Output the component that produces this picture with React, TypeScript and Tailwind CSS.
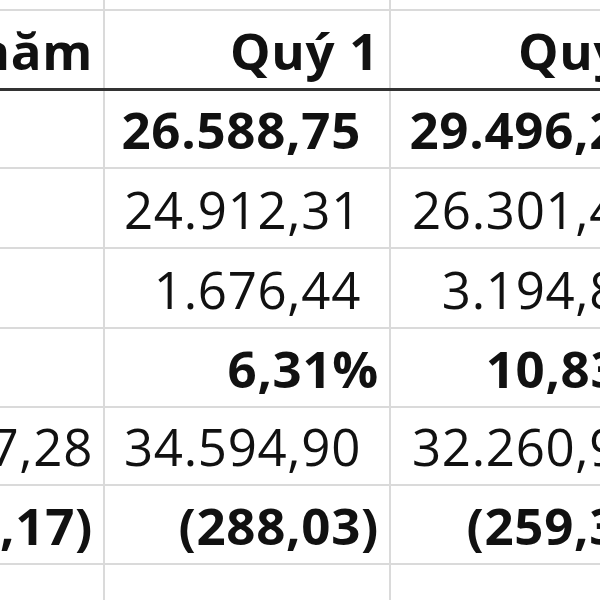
import React from "react";

type Cell = { t: string; pos?: boolean };
type Row = { h: string; bold: boolean; thick?: boolean; cells: [Cell, Cell, Cell] };

const rows: Row[] = [
  { h: "h-[80px]", bold: true, thick: true, cells: [{ t: "Cả năm" }, { t: "Quý 1" }, { t: "Quý 2" }] },
  { h: "h-[78px]", bold: true, cells: [{ t: "" }, { t: "26.588,75", pos: true }, { t: "29.496,21", pos: true }] },
  { h: "h-[80px]", bold: false, cells: [{ t: "" }, { t: "24.912,31", pos: true }, { t: "26.301,45", pos: true }] },
  { h: "h-[80px]", bold: false, cells: [{ t: "" }, { t: "1.676,44", pos: true }, { t: "3.194,83", pos: true }] },
  { h: "h-[79px]", bold: true, cells: [{ t: "" }, { t: "6,31%" }, { t: "10,83%" }] },
  { h: "h-[78px]", bold: false, cells: [{ t: "137.617,28" }, { t: "34.594,90", pos: true }, { t: "32.260,94", pos: true }] },
  { h: "h-[79px]", bold: true, cells: [{ t: "(1.122,17)" }, { t: "(288,03)" }, { t: "(259,38)" }] },
];

const widths = ["w-[301px]", "w-[286px]", "w-[288px]"];

function CellBox({ c, i, row }: { c: Cell; i: number; row: Row }) {
  return (
    <div
      className={`${widths[i]} shrink-0 h-full flex items-end justify-end pr-[10px] pb-[12px] border-r-2 border-r-[#dadada] whitespace-nowrap`}
    >
      {c.t && (
        <span
          className={`leading-none text-[51px] tracking-[0.7px] text-[#111] ${row.bold ? "font-bold" : "font-medium"}`}
        >
          {c.t}
          {c.pos && i > 0 && <span className="inline-block w-[18px]" />}
        </span>
      )}
    </div>
  );
}

export default function App() {
  return (
    <div
      className="w-[600px] h-[600px] overflow-hidden bg-white"
      style={{ fontFamily: '"Open Sans", "Noto Sans", sans-serif' }}
    >
      <div className="ml-[-196px] w-[875px] flex flex-col">
        <div className="h-[11px] flex border-b-2 border-b-[#dadada]">
          {widths.map((w, i) => (
            <div key={i} className={`${w} shrink-0 h-full border-r-2 border-r-[#dadada]`} />
          ))}
        </div>
        {rows.map((row, r) => (
          <div
            key={r}
            className={`${row.h} flex ${row.thick ? "border-b-[3px] border-b-[#333]" : "border-b-2 border-b-[#dadada]"}`}
          >
            {row.cells.map((c, i) => (
              <CellBox key={i} c={c} i={i} row={row} />
            ))}
          </div>
        ))}
        <div className="h-[60px] flex">
          {widths.map((w, i) => (
            <div key={i} className={`${w} shrink-0 h-full border-r-2 border-r-[#dadada]`} />
          ))}
        </div>
      </div>
    </div>
  );
}
